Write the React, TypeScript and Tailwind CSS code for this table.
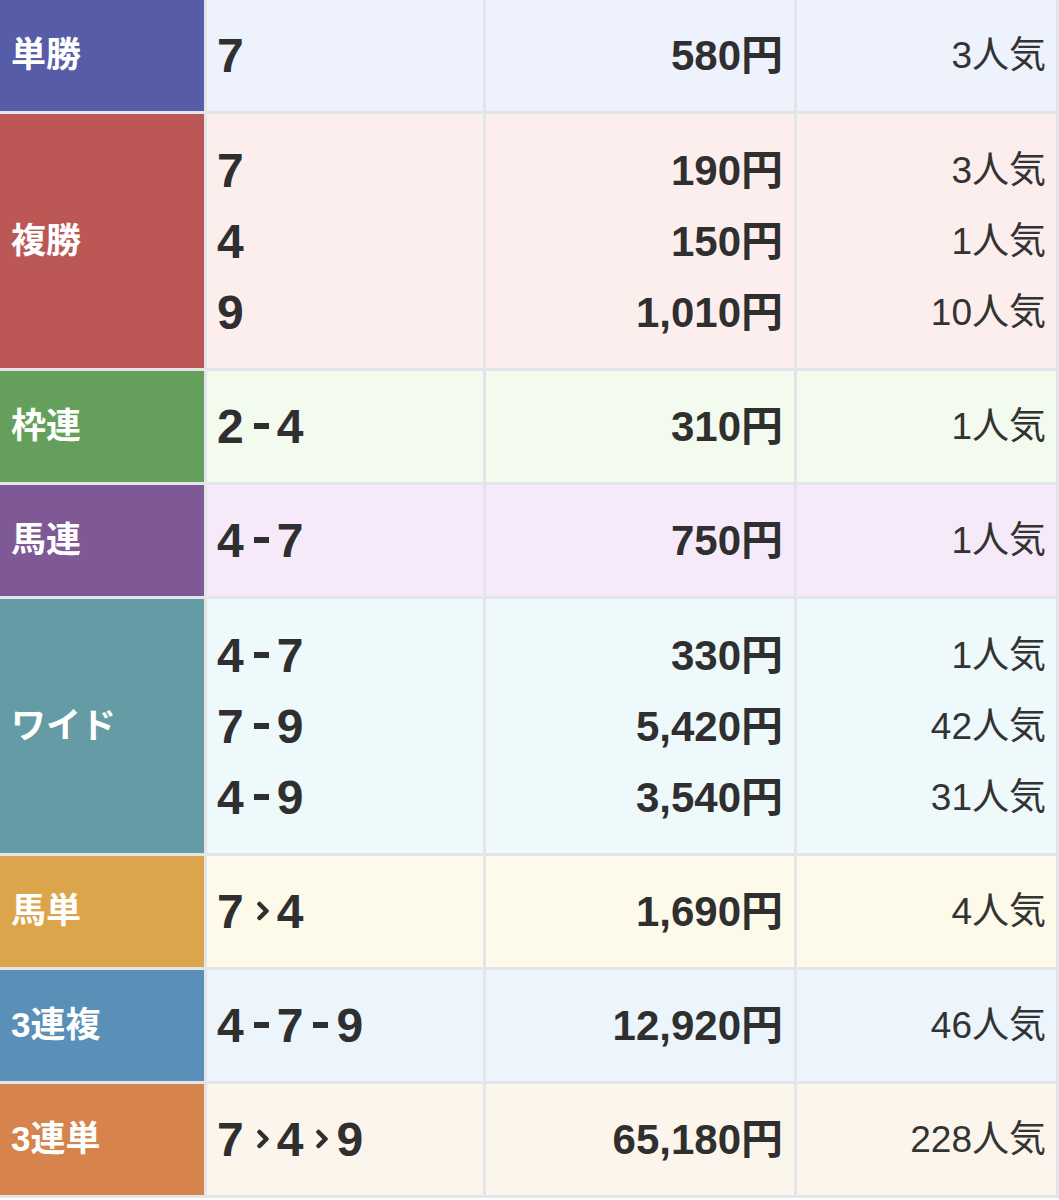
type Line = { combo: string; pay: string; pop: string };

type Bet = {
  label: string;
  labelBg: string;
  rowBg: string;
  lines: Line[];
};

const bets: Bet[] = [
  {
    label: "単勝",
    labelBg: "bg-[#575ca9]",
    rowBg: "bg-[#eef2fd]",
    lines: [{ combo: "7", pay: "580円", pop: "3人気" }],
  },
  {
    label: "複勝",
    labelBg: "bg-[#bb5856]",
    rowBg: "bg-[#fdeeee]",
    lines: [
      { combo: "7", pay: "190円", pop: "3人気" },
      { combo: "4", pay: "150円", pop: "1人気" },
      { combo: "9", pay: "1,010円", pop: "10人気" },
    ],
  },
  {
    label: "枠連",
    labelBg: "bg-[#64a05b]",
    rowBg: "bg-[#f3fbee]",
    lines: [{ combo: "2-4", pay: "310円", pop: "1人気" }],
  },
  {
    label: "馬連",
    labelBg: "bg-[#7e5995]",
    rowBg: "bg-[#f6eafa]",
    lines: [{ combo: "4-7", pay: "750円", pop: "1人気" }],
  },
  {
    label: "ワイド",
    labelBg: "bg-[#649ba4]",
    rowBg: "bg-[#eef9fc]",
    lines: [
      { combo: "4-7", pay: "330円", pop: "1人気" },
      { combo: "7-9", pay: "5,420円", pop: "42人気" },
      { combo: "4-9", pay: "3,540円", pop: "31人気" },
    ],
  },
  {
    label: "馬単",
    labelBg: "bg-[#dca54c]",
    rowBg: "bg-[#fefae9]",
    lines: [{ combo: "7>4", pay: "1,690円", pop: "4人気" }],
  },
  {
    label: "3連複",
    labelBg: "bg-[#5a8fb8]",
    rowBg: "bg-[#ecf4fc]",
    lines: [{ combo: "4-7-9", pay: "12,920円", pop: "46人気" }],
  },
  {
    label: "3連単",
    labelBg: "bg-[#d6844b]",
    rowBg: "bg-[#fcf5ec]",
    lines: [{ combo: "7>4>9", pay: "65,180円", pop: "228人気" }],
  },
];

// "-" → thick dash, ">" → small chevron, anything else stays as text
const Combo = ({ value }: { value: string }) => (
  <span className="whitespace-nowrap">
    {value.split("").map((ch, i) => {
      if (ch === "-") {
        return (
          <span
            key={i}
            aria-label="-"
            className="inline-block w-[15px] h-[6px] bg-[#2f2f2f] ml-[10px] mr-[8px] align-[14px]"
          />
        );
      }
      if (ch === ">") {
        return (
          <svg
            key={i}
            aria-label=">"
            width="12"
            height="20"
            viewBox="0 0 12 20"
            className="inline-block ml-[13px] mr-[8px] align-[7px]"
          >
            <path
              d="M2.5 3 L9.5 10 L2.5 17"
              fill="none"
              stroke="#2f2f2f"
              strokeWidth="4.5"
              strokeLinecap="round"
              strokeLinejoin="round"
            />
          </svg>
        );
      }
      return <span key={i}>{ch}</span>;
    })}
  </span>
);

export default function App() {
  return (
    <div className="w-[1059px] bg-[#e3e5eb] pr-[3px] pb-[3px] flex flex-col gap-[3px] font-['Liberation_Sans','Noto_Sans_CJK_JP',sans-serif]">
      {bets.map((bet) => {
        const tall = bet.lines.length > 1;
        return (
          <div
            key={bet.label}
            className={`grid grid-cols-[204px_276px_308px_259px] gap-x-[3px] ${
              tall ? "h-[254px]" : "h-[111px]"
            }`}
          >
            <div
              className={`${bet.labelBg} flex items-center pl-[11px] text-white text-[35px] font-bold`}
            >
              {bet.label}
            </div>
            <div
              className={`${bet.rowBg} flex flex-col justify-center pl-[10px] text-[#2f2f2f] text-[48px] font-bold`}
            >
              {bet.lines.map((l, i) => (
                <div key={i} className={tall ? "leading-[71px]" : "leading-none"}>
                  <Combo value={l.combo} />
                </div>
              ))}
            </div>
            <div
              className={`${bet.rowBg} flex flex-col justify-center items-end pr-[11px] text-[#2f2f2f] text-[42px] font-bold`}
            >
              {bet.lines.map((l, i) => (
                <div key={i} className={tall ? "leading-[71px]" : "leading-none"}>
                  {l.pay}
                </div>
              ))}
            </div>
            <div
              className={`${bet.rowBg} flex flex-col justify-center items-end pr-[10px] text-[#333] text-[37px] font-normal`}
            >
              {bet.lines.map((l, i) => (
                <div key={i} className={tall ? "leading-[71px]" : "leading-none"}>
                  {l.pop}
                </div>
              ))}
            </div>
          </div>
        );
      })}
    </div>
  );
}
